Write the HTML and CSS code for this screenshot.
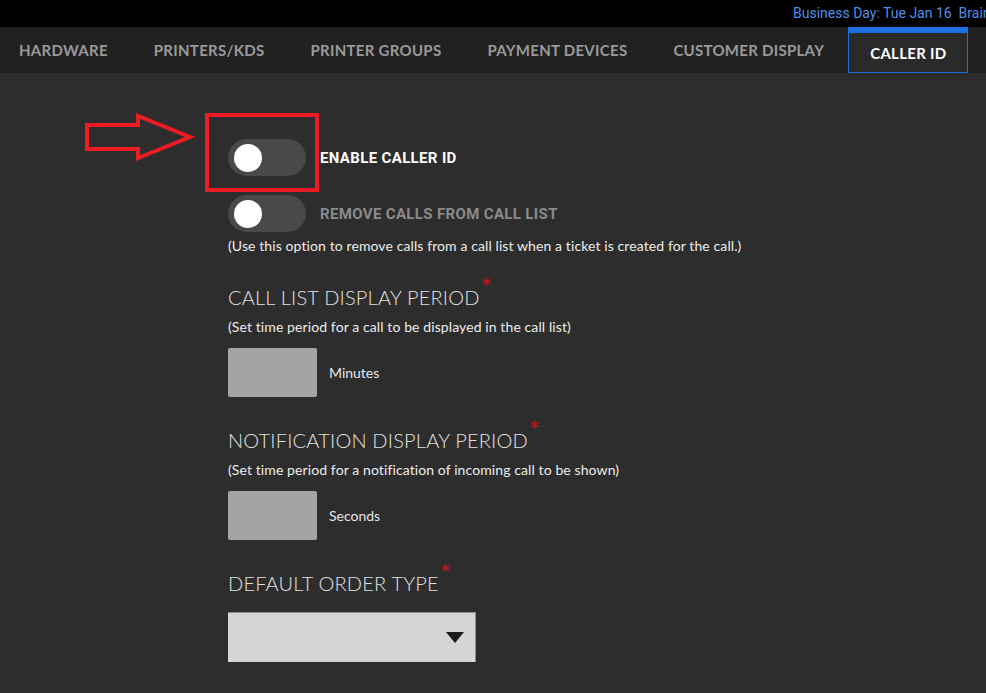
FILE: index.html
```html
<!DOCTYPE html>
<html lang="en">
<head>
    <meta charset="UTF-8">
    <meta name="viewport" content="width=device-width, initial-scale=1.0">
    <title>Caller ID Settings</title>
    <link rel="stylesheet" href="styles.css">
</head>
<body>
    <div class="topbar">
        <span class="business-day">Business Day: Tue Jan 16 &nbsp;Brainstorm Pizza</span>
    </div>
    <nav class="tabs">
        <a href="#" class="tab">HARDWARE</a>
        <a href="#" class="tab">PRINTERS/KDS</a>
        <a href="#" class="tab">PRINTER GROUPS</a>
        <a href="#" class="tab">PAYMENT DEVICES</a>
        <a href="#" class="tab">CUSTOMER DISPLAY</a>
        <a href="#" class="tab active">CALLER ID</a>
    </nav>
    <main class="content">
        <svg class="callout-arrow" width="112" height="50" viewBox="0 0 112 50">
            <polygon points="3,12 54,12 54,3 106,24 54,45 54,36 3,36" fill="none" stroke="#ed1c24" stroke-width="4" stroke-linejoin="miter"/>
        </svg>
        <div class="callout-box"></div>

        <div class="toggle-row">
            <span class="toggle"><span class="knob"></span></span>
            <span class="toggle-label">ENABLE CALLER ID</span>
        </div>
        <div class="toggle-row">
            <span class="toggle"><span class="knob"></span></span>
            <span class="toggle-label muted">REMOVE CALLS FROM CALL LIST</span>
        </div>
        <p class="hint first">(Use this option to remove calls from a call list when a ticket is created for the call.)</p>

        <section class="field">
            <h2>CALL LIST DISPLAY PERIOD<span class="req">*</span></h2>
            <p class="hint">(Set time period for a call to be displayed in the call list)</p>
            <div class="input-row">
                <span class="num-input"></span>
                <span class="unit">Minutes</span>
            </div>
        </section>

        <section class="field">
            <h2>NOTIFICATION DISPLAY PERIOD<span class="req">*</span></h2>
            <p class="hint">(Set time period for a notification of incoming call to be shown)</p>
            <div class="input-row">
                <span class="num-input"></span>
                <span class="unit">Seconds</span>
            </div>
        </section>

        <section class="field">
            <h2>DEFAULT ORDER TYPE<span class="req">*</span></h2>
            <div class="select">
                <svg width="18" height="12" viewBox="0 0 18 12"><polygon points="0,0 18,0 9,11" fill="#1a1a1a"/></svg>
            </div>
        </section>
    </main>
</body>
</html>
```

FILE: styles.css
```css
body { margin: 0; background-color: #2d2d2d; color: #e6e6e6; font-family: Lato, "Open Sans", sans-serif; overflow: hidden; }
.topbar { height: 27px; background-color: #000; overflow: hidden; white-space: nowrap; padding-left: 793px; box-sizing: border-box; }
.business-day { color: #4f8fe6; font-family: Roboto, sans-serif; font-size: 14px; line-height: 26px; }
.tabs { display: flex; height: 46px; background-color: #212121; }
.tab { display: flex; align-items: center; padding: 0 23px; color: #9a9a9a; font-weight: 700; font-size: 15px; letter-spacing: 0.28px; text-decoration: none; box-sizing: border-box; }
.tab:first-child { padding-left: 19px; }
.tab.active { color: #fff; background-color: #2a2a2a; border: 1px solid #1c6fe3; border-top: 6px solid #1c6fe3; padding: 0 21px; margin-left: 1px; }
.content { position: relative; padding: 66px 0 0 228px; }
.callout-arrow { position: absolute; left: 84px; top: 40px; }
.callout-box { position: absolute; left: 205px; top: 40px; width: 106px; height: 71px; border: 4px solid #ed1c24; }
.toggle-row { display: flex; align-items: center; height: 37px; margin-bottom: 19px; }
.toggle { display: flex; align-items: center; width: 78px; height: 37px; border-radius: 19px; background-color: #494949; padding-left: 6px; box-sizing: border-box; }
.knob { width: 28px; height: 28px; border-radius: 50%; background-color: #fff; }
.toggle-label { margin-left: 14px; font-family: Roboto, sans-serif; font-weight: 700; font-size: 15px; letter-spacing: 0.35px; color: #fff; }
.toggle-label.muted { color: #8a8a8a; }
.hint { margin: 0; font-size: 14px; letter-spacing: 0.1px; line-height: 16px; color: #ececec; }
.hint.first { margin: -13px 0 2px; }
.field { margin-top: 31px; }
.field h2 { margin: 0 0 10px; font-weight: 300; font-size: 20px; letter-spacing: 0.2px; line-height: 24px; color: #e2e2e2; }
.req { color: #c8141b; font-size: 26px; font-weight: 400; line-height: 0; position: relative; top: -7px; margin-left: 1px; }
.input-row { display: flex; align-items: center; margin-top: 13px; }
.num-input { width: 89px; height: 49px; border-radius: 2px; background-color: #a4a4a4; }
.unit { margin-left: 12px; font-size: 14px; color: #e6e6e6; }
.select { display: flex; align-items: center; justify-content: flex-end; width: 248px; height: 50px; background-color: #d5d5d5; border-top: 1px solid #8c8c8c; border-right: 1px solid #8c8c8c; box-sizing: border-box; padding-right: 11px; margin-top: 17px; }
```
